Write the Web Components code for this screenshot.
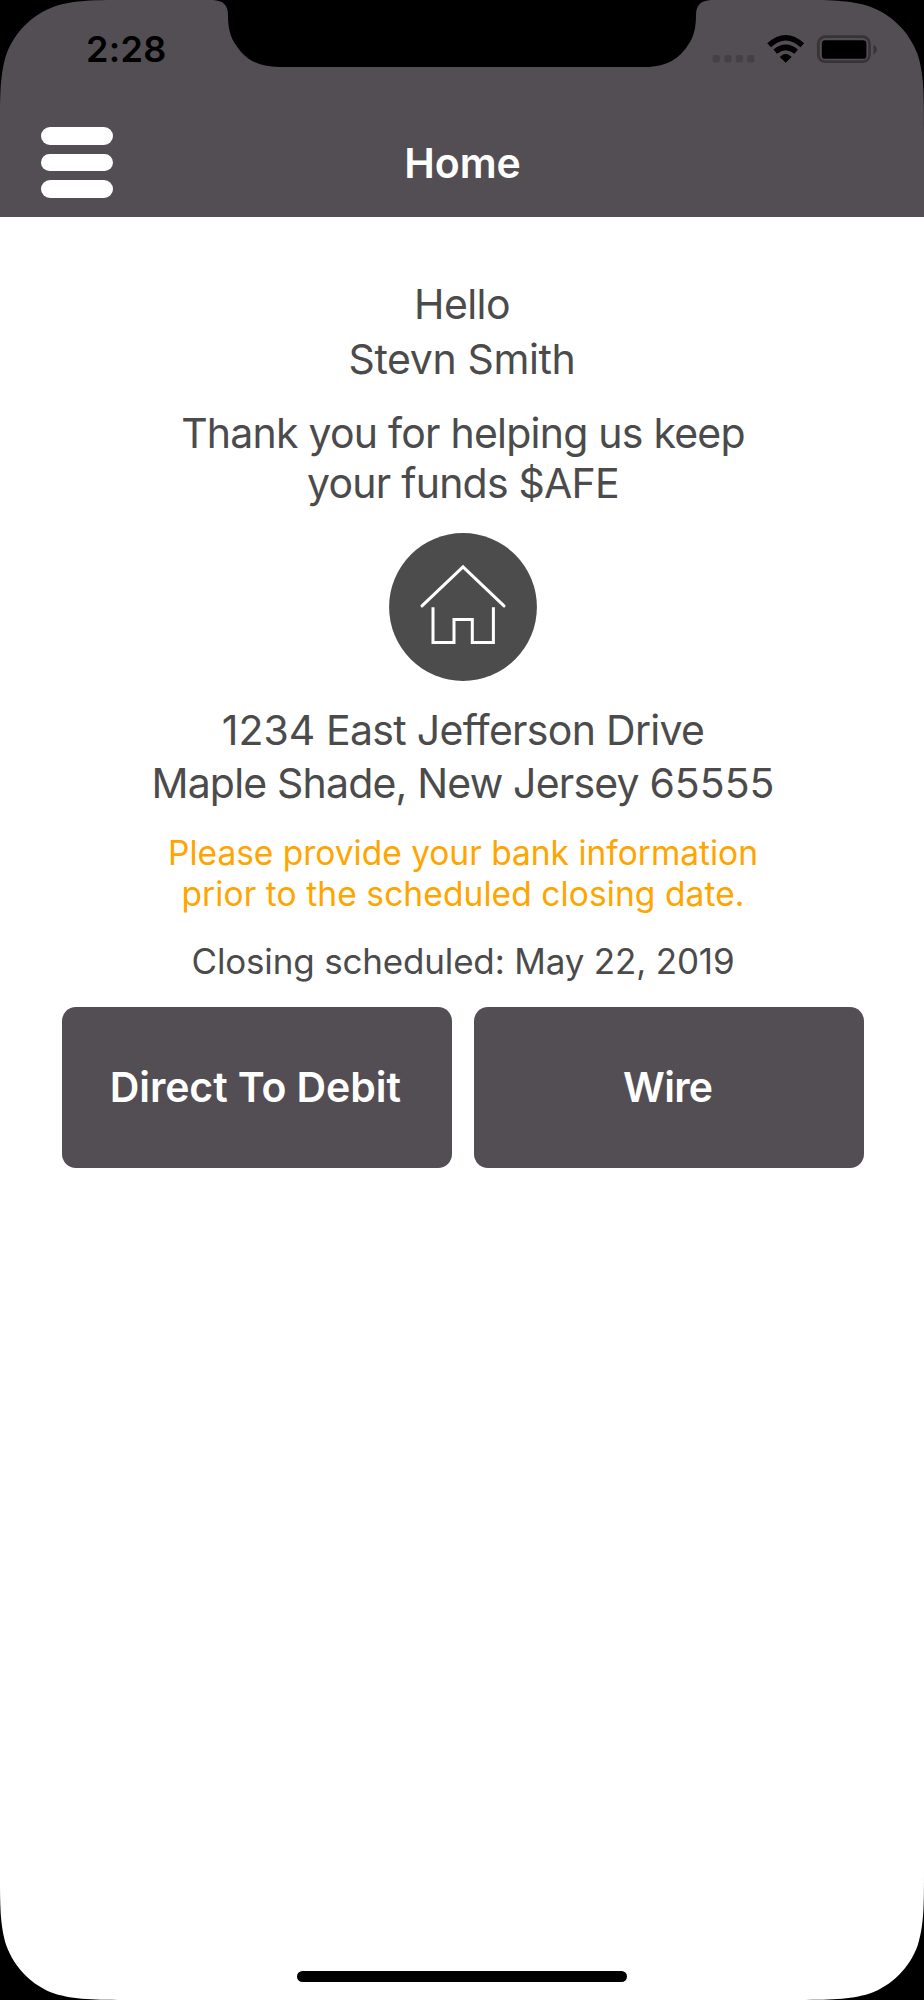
<!DOCTYPE html>
<html lang="en">
<head>
<meta charset="utf-8">
<title>Home</title>
<style>
    body{
        margin: 0;
        background: black;
        font-family: Inter, "Liberation Sans", sans-serif;
        --bar: #534e53;
        --text: #4b4b4b;
    }
    .number{
        letter-spacing: 0;
    }
</style>
</head>
<body>
<phone-screen>
    <status-bar slot="top" time="2:28"></status-bar>
    <nav-bar slot="top">Home</nav-bar>
    <text-block style="--size: 41px; --line: 55px; --top: 60px; padding-right: 2px">
        <text-line spacing="-0.61">Hello</text-line>
        <text-line spacing="-0.37">Stevn Smith</text-line>
    </text-block>
    <text-block style="--size: 41px; --line: 49.4px; --top: 22.8px">
        <text-line spacing="-0.77">Thank you for helping us keep</text-line>
        <text-line spacing="-0.77">your funds $AFE</text-line>
    </text-block>
    <home-badge></home-badge>
    <text-block style="--size: 41px; --line: 52.7px; --top: 23.4px">
        <text-line spacing="-0.7"><span class="number">1234</span> East Jefferson Drive</text-line>
        <text-line spacing="-0.82">Maple Shade, New Jersey <span class="number">65555</span></text-line>
    </text-block>
    <text-block style="--size: 33.5px; --line: 41px; --top: 23.8px; color: #ffa500">
        <text-line spacing="-0.01">Please provide your bank information</text-line>
        <text-line spacing="0.09">prior to the scheduled closing date.</text-line>
    </text-block>
    <text-block style="--size: 35px; --line: 42px; --top: 24.6px">
        <text-line spacing="-0.17">Closing scheduled: May 22, 2019</text-line>
    </text-block>
    <button-row>
        <action-button spacing="-0.1">Direct To Debit</action-button>
        <action-button spacing="-0.74">Wire</action-button>
    </button-row>
</phone-screen>

<script>
class PhoneScreen extends HTMLElement {
    constructor() {
        super();
        this.attachShadow({ mode: 'open' });
        this.shadowRoot.innerHTML = `
            <style>
                :host{
                    display: flex;
                    flex-direction: column;
                    position: relative;
                    width: 924px;
                    height: 2000px;
                    background: white;
                    overflow: hidden;
                }
                main{
                    flex: 1;
                    display: flex;
                    flex-direction: column;
                    align-items: center;
                    padding-left: 2px;
                }
                footer{
                    display: flex;
                    justify-content: center;
                    padding-bottom: 18px;
                }
                .indicator{
                    width: 330px;
                    height: 11px;
                    border-radius: 6px;
                    background: black;
                }
                .frame{
                    position: absolute;
                    inset: 0;
                    pointer-events: none;
                }
            </style>
            <slot name="top"></slot>
            <main><slot></slot></main>
            <footer><div class="indicator"></div></footer>
            <svg class="frame" width="924" height="2000" viewBox="0 0 924 2000">
                <defs>
                    <path id="corner" d="M0 0V131.5C0 93.6 0 74.7 6.4 54.3C14.5 32.1 32.1 14.5 54.3 6.4C74.7 0 93.6 0 131.5 0Z"/>
                </defs>
                <use href="#corner"/>
                <use href="#corner" transform="translate(924 0) scale(-1 1)"/>
                <use href="#corner" transform="translate(0 2000) scale(1 -1)"/>
                <use href="#corner" transform="translate(924 2000) scale(-1 -1)"/>
                <path d="M213 0C223 0.5 228 5 228 15C228 27 230 37 236 45C244 58 257 67 279 67H645C667 67 680 58 688 45C694 37 696 27 696 15C696 5 701 0.5 711 0Z"/>
            </svg>
        `;
    }
}

class StatusBar extends HTMLElement {
    constructor() {
        super();
        this.attachShadow({ mode: 'open' });
        this.shadowRoot.innerHTML = `
            <style>
                :host{
                    display: flex;
                    justify-content: space-between;
                    height: 106px;
                    box-sizing: border-box;
                    padding: 28px 46px 0 86px;
                    background: var(--bar);
                    color: black;
                }
                .time{
                    font-size: 36px;
                    font-weight: 600;
                    line-height: 42px;
                    letter-spacing: 0.32px;
                }
            </style>
            <span class="time">${this.getAttribute('time')}</span>
            <svg width="166" height="42" viewBox="712 28 166 42">
                <g fill="#454046">
                    <rect x="712.7" y="55" width="7.2" height="7.6" rx="2"/>
                    <rect x="724.3" y="55" width="7.2" height="7.6" rx="2"/>
                    <rect x="735.8" y="55" width="7.2" height="7.6" rx="2"/>
                    <rect x="747.3" y="55" width="7.2" height="7.6" rx="2"/>
                </g>
                <g fill="none" stroke="black" stroke-width="5.4">
                    <path d="M769.1 45.3Q785.7 30.3 802.3 45.3"/>
                    <path d="M775.2 51.7Q785.7 43 796.2 51.7"/>
                </g>
                <path d="M785.7 62.3L780.2 57Q785.7 51.7 791.2 57Z" stroke="black" stroke-width="0.8" stroke-linejoin="round"/>
                <rect x="818.3" y="36.7" width="51.2" height="25" rx="7" fill="none" stroke="#373337" stroke-width="2.8"/>
                <rect x="821.8" y="40.2" width="44.6" height="18.6" rx="3.4"/>
                <path d="M873.5 44.8Q876.8 46.5 876.8 49.6Q876.8 52.7 873.5 54.4Z" fill="#373337"/>
            </svg>
        `;
    }
}

class NavBar extends HTMLElement {
    constructor() {
        super();
        this.attachShadow({ mode: 'open' });
        this.shadowRoot.innerHTML = `
            <style>
                :host{
                    display: grid;
                    grid-template-columns: 72.4px 1fr 72.4px;
                    align-items: center;
                    height: 110.6px;
                    box-sizing: border-box;
                    padding: 0 39.6px 0 40.6px;
                    background: var(--bar);
                    color: white;
                }
                .menu{
                    display: flex;
                    flex-direction: column;
                    gap: 9px;
                    margin-top: 2px;
                }
                .menu i{
                    height: 17.6px;
                    border-radius: 9px;
                    background: white;
                }
                .title{
                    text-align: center;
                    font-size: 41px;
                    font-weight: 600;
                    line-height: 50px;
                    margin-top: 3px;
                }
            </style>
            <div class="menu"><i></i><i></i><i></i></div>
            <div class="title"><slot></slot></div>
        `;
    }
}

class TextBlock extends HTMLElement {
    constructor() {
        super();
        this.attachShadow({ mode: 'open' });
        this.shadowRoot.innerHTML = `
            <style>
                :host{
                    display: flex;
                    flex-direction: column;
                    align-items: center;
                    margin-top: var(--top);
                    font-size: var(--size);
                    line-height: var(--line);
                    color: var(--text);
                }
            </style>
            <slot></slot>
        `;
    }
}

class TextLine extends HTMLElement {
    constructor() {
        super();
        this.attachShadow({ mode: 'open' });
        this.shadowRoot.innerHTML = `
            <style>
                :host{
                    display: block;
                    white-space: nowrap;
                    letter-spacing: ${this.getAttribute('spacing')}px;
                }
            </style>
            <slot></slot>
        `;
    }
}

class HomeBadge extends HTMLElement {
    constructor() {
        super();
        this.attachShadow({ mode: 'open' });
        this.shadowRoot.innerHTML = `
            <style>
                :host{
                    display: block;
                    width: 148px;
                    height: 148px;
                    margin-top: 24.4px;
                }
                svg{
                    display: block;
                }
            </style>
            <svg width="148" height="148" viewBox="0 0 148 148">
                <circle cx="74" cy="74" r="73.9" fill="#4c4c4c"/>
                <g fill="none" stroke="white" stroke-width="3">
                    <path d="M33 72.9L74 33.8L115 72.9" stroke-linecap="round"/>
                    <path d="M44 74.2V109.4H65V86.6H83.3V109.4H104.4V74.2"/>
                </g>
            </svg>
        `;
    }
}

class ButtonRow extends HTMLElement {
    constructor() {
        super();
        this.attachShadow({ mode: 'open' });
        this.shadowRoot.innerHTML = `
            <style>
                :host{
                    display: grid;
                    grid-template-columns: 1fr 1fr;
                    gap: 22.4px;
                    width: 802.4px;
                    margin-top: 25.6px;
                }
            </style>
            <slot></slot>
        `;
    }
}

class ActionButton extends HTMLElement {
    constructor() {
        super();
        this.attachShadow({ mode: 'open' });
        this.shadowRoot.innerHTML = `
            <style>
                button{
                    display: block;
                    width: 100%;
                    height: 160.3px;
                    border: none;
                    border-radius: 14px;
                    background: var(--bar);
                    color: white;
                    font: 600 41px/50px Inter, "Liberation Sans", sans-serif;
                    letter-spacing: ${this.getAttribute('spacing')}px;
                    padding: 0 9px 1px 6px;
                }
                :host{
                    display: block;
                }
            </style>
            <button><slot></slot></button>
        `;
    }
}

customElements.define('phone-screen', PhoneScreen);
customElements.define('status-bar', StatusBar);
customElements.define('nav-bar', NavBar);
customElements.define('text-block', TextBlock);
customElements.define('text-line', TextLine);
customElements.define('home-badge', HomeBadge);
customElements.define('button-row', ButtonRow);
customElements.define('action-button', ActionButton);
</script>
</body>
</html>
